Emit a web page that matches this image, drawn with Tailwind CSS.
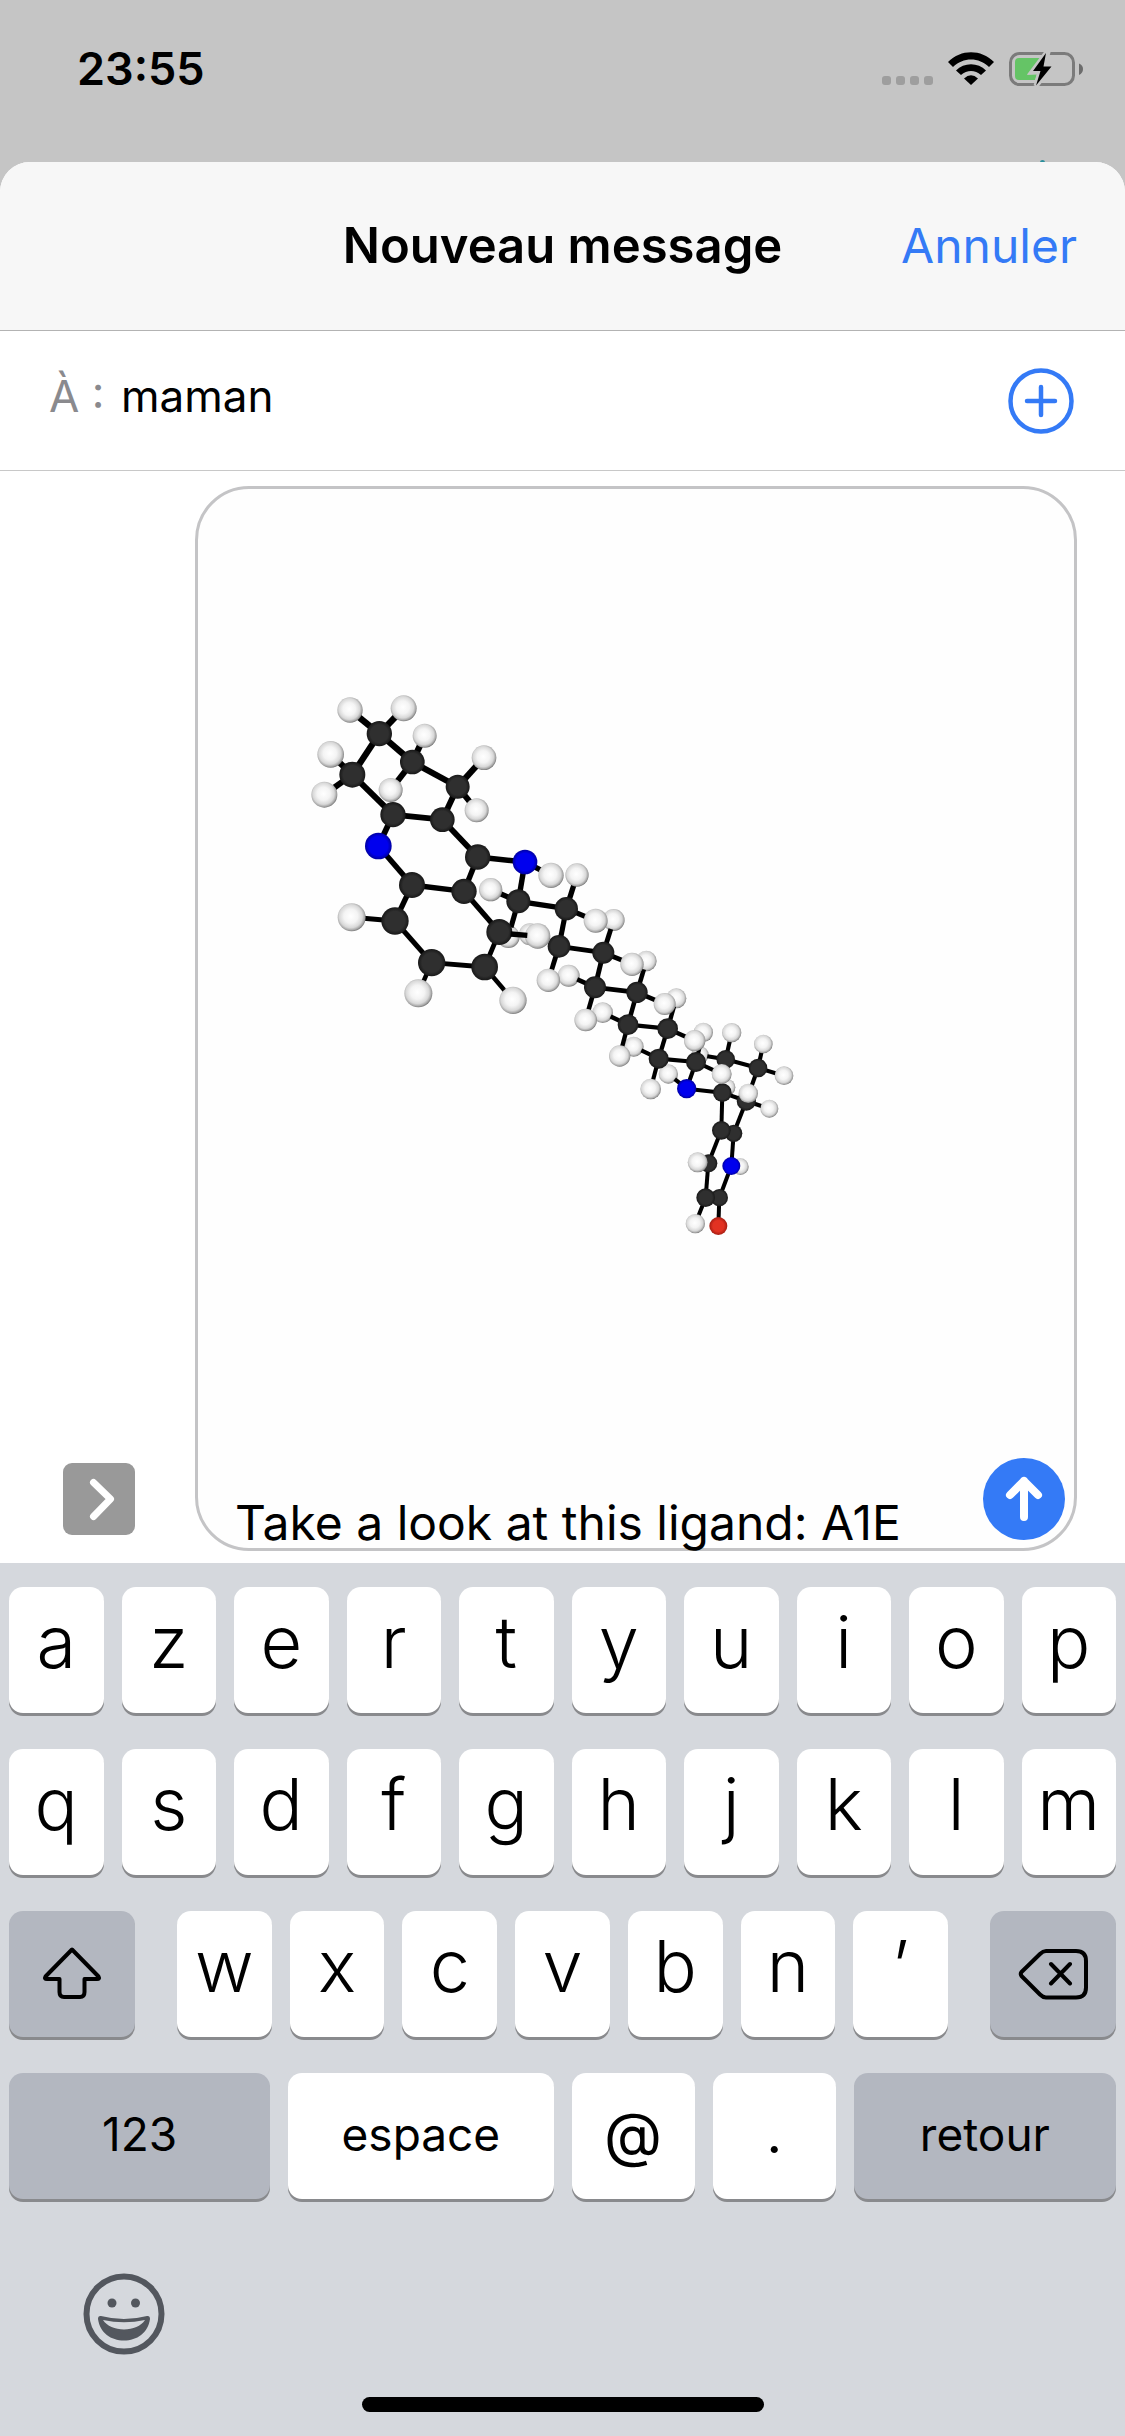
<!DOCTYPE html>
<html lang="fr">
<head>
<meta charset="utf-8">
<meta name="viewport" content="width=device-width, initial-scale=1">
<title>Nouveau message</title>
<script src="https://cdn.jsdelivr.net/npm/@tailwindcss/browser@4"></script>
</head>
<body class="flex min-h-screen flex-col bg-[#c5c5c5] font-['Inter','Liberation_Sans',sans-serif] text-black">

<!-- Status bar -->
<header class="relative flex h-[162px] shrink-0 items-start justify-between overflow-hidden pt-[42px] pr-[42px] pl-[77px]">
  <time class="text-[45px] leading-[54px] font-semibold">23:55</time>
  <div class="flex items-start pt-[10px]">
    <div class="mt-6 mr-[15px] flex gap-[5px]" aria-hidden="true">
      <span class="size-[9px] rounded-[3px] bg-[#9e9e9e]"></span>
      <span class="size-[9px] rounded-[3px] bg-[#9e9e9e]"></span>
      <span class="size-[9px] rounded-[3px] bg-[#9e9e9e]"></span>
      <span class="size-[9px] rounded-[3px] bg-[#9e9e9e]"></span>
    </div>
    <svg class="mr-[15px] h-[33px] w-[46px]" viewBox="0 0 46 33" aria-label="Wi-Fi">
      <path d="M0 10C13-3 33-3 46 10L41 15C31 5 15 5 5 15Z"/>
      <path d="M8 18.500C16 10 30 10 38 18.500L33 23C27 17.500 19 17.500 13 23Z"/>
      <path d="M16 26.500Q23 20 30 26.500L23 33Z"/>
    </svg>
    <svg class="h-[36px] w-[74px]" viewBox="0 0 74 36" aria-label="Batterie en charge">
      <rect x="1.500" y="1.500" width="63" height="31" rx="9" fill="none" stroke="#7b7b7b" stroke-width="3"/>
      <path d="M70 11.500Q74 13 74 17T70 23Z" fill="#6c6c6c"/>
      <path d="M10 6H32L18 23L28 22L26 28H10Q6 28 6 24V10Q6 6 10 6Z" fill="#65c466"/>
      <path d="M38 0L23 20H31L27 34L43 14H35L39 0Z" stroke="#c5c5c5" stroke-width="5"/>
      <path d="M37 1L24 19H31.500L27 33.500L42.500 14.500H34.500Z"/>
    </svg>
  </div>
  <span class="absolute right-20 -bottom-[3px] size-[5px] rounded-full bg-[#2a8f9c]"></span>
</header>

<main class="flex grow flex-col overflow-hidden rounded-t-[30px] bg-white">
  <!-- Title bar -->
  <div class="grid h-[169px] shrink-0 grid-cols-[1fr_auto_1fr] items-center border-b border-[#b3b3b3] bg-[#f7f7f7] px-[48px]">
    <h1 class="col-start-2 text-[49px] leading-[60px] font-semibold">Nouveau message</h1>
    <button type="button" class="justify-self-end text-[48px] leading-[60px] text-[#347af6]">Annuler</button>
  </div>

  <!-- Recipient -->
  <div class="flex h-[140px] shrink-0 items-center border-b border-[#c8c8c8] pr-[51px] pl-[49px]">
    <label for="to" class="w-[72px] pb-[10px] text-[44px] leading-[54px] whitespace-nowrap text-[#8a8a8e]">À :</label>
    <input id="to" type="text" value="maman" class="min-w-0 grow bg-transparent pb-[10px] text-[44px] leading-[54px] outline-none">
    <button type="button" aria-label="Ajouter un contact" class="shrink-0">
      <svg class="size-[66px]" viewBox="0 0 66 66" fill="none" stroke="#347af6" stroke-linecap="round">
        <circle cx="33" cy="33" r="30.500" stroke-width="4.500"/>
        <path d="M33 19V47M19 33H47" stroke-width="4.500"/>
      </svg>
    </button>
  </div>

  <!-- Message composer -->
  <div class="flex grow items-end gap-[60px] pt-[15px] pr-[48px] pb-3 pl-[63px]">
    <button type="button" aria-label="Afficher les apps" class="mb-4 flex size-[72px] shrink-0 items-center justify-center rounded-[9px] bg-[#999]">
      <svg class="size-[72px]" viewBox="0 0 72 72" fill="none" stroke="#fff" stroke-width="7" stroke-linecap="round" stroke-linejoin="round"><path d="M30.500 19.500L47.500 36L30.500 53.500"/></svg>
    </button>
    <div class="relative flex min-w-0 grow flex-col justify-between self-stretch rounded-[54px] border-[3px] border-[#c4c4c6] bg-[#fefefe]">
      <svg id="ligand" class="mt-[191px] ml-[102px] h-[570px] w-[500px]" viewBox="0 0 1500 1710" role="img" aria-label="Ligand A1E">
        <defs>
          <radialGradient id="hydrogen" cx=".47" cy=".46" r=".55">
            <stop offset="0" stop-color="#fff"/><stop offset=".45" stop-color="#f4f4f4"/><stop offset=".75" stop-color="#d8d8d8"/><stop offset=".9" stop-color="#a8a8a8"/><stop offset="1" stop-color="#707070"/>
          </radialGradient>
          <radialGradient id="carbon"><stop offset=".7" stop-color="#2f2f2f"/><stop offset="1" stop-color="#181818"/></radialGradient>
          <radialGradient id="nitrogen"><stop offset=".7" stop-color="#0000ee"/><stop offset="1" stop-color="#0000a0"/></radialGradient>
          <radialGradient id="oxygen"><stop offset=".6" stop-color="#e23222"/><stop offset="1" stop-color="#a51d12"/></radialGradient>
        </defs>
      </svg>
      <input type="text" aria-label="Message" value="Take a look at this ligand: A1E" class="relative -mb-[10px] ml-[37px] h-[72px] w-[720px] max-w-[85%] bg-transparent text-[48px] leading-[60px] outline-none">
      <button type="button" aria-label="Envoyer" class="absolute right-[9px] bottom-2 size-[82px] rounded-full bg-[#347af6]">
        <svg class="size-[82px]" viewBox="0 0 82 82" fill="none" stroke="#fff" stroke-width="8" stroke-linecap="round" stroke-linejoin="round"><path d="M41 59V23M27 37L41 23L55 37"/></svg>
      </button>
    </div>
  </div>
</main>

<!-- Keyboard -->
<section aria-label="Clavier" class="shrink-0 bg-[#d5d8dd] px-[9px] pt-6 pb-6">
  <div id="keys" class="flex flex-col gap-9"></div>
  <div class="mt-[74px] flex pl-[74px]">
    <button type="button" aria-label="Emoji">
      <svg class="size-[82px]" viewBox="0 0 82 82">
        <circle cx="41" cy="41" r="37.500" fill="none" stroke="#53575e" stroke-width="6"/>
        <circle cx="29" cy="30" r="4.500" fill="#53575e"/><circle cx="52.500" cy="30" r="4.500" fill="#53575e"/>
        <path fill="#53575e" fill-rule="evenodd" d="M18 43Q41 49 64 43Q67 42.500 67 46C65 60 54 67.500 41 67.500S17 60 15 46Q15 42.500 18 43ZM20 47C24 53 32 56.500 41 56.500S58 53 62 47Q41 51.500 20 47Z"/>
      </svg>
    </button>
  </div>
  <div class="mx-auto mt-[42px] h-[15px] w-[402px] rounded-full bg-black"></div>
</section>

<script>
  // Keyboard rows
  const SHIFT = '<svg class="size-[60px]" viewBox="0 0 60 60" fill="none" stroke="#000" stroke-width="4" stroke-linejoin="round"><path d="M30 5.500L3.500 32.500Q2 35 5 35H17.500V48Q17.500 53 22 53H38Q42.500 53 42.500 48V35H55Q58 35 56.500 32.500Z"/></svg>';
  const DELETE = '<svg class="h-[52px] w-[70px]" viewBox="0 0 70 52" fill="none" stroke="#000" stroke-width="4" stroke-linecap="round" stroke-linejoin="round"><path d="M3.500 24Q2 26 3.500 28L22 46.500Q25 49.500 28 49.500H58Q68 49.500 68 39.500V13Q68 3 58 3H28Q25 3 22 6ZM33 16L52 35.500M52 16L33 35.500"/></svg>';
  const base = 'flex h-[126px] min-w-0 items-center justify-center rounded-[14px] shadow-[0_3px_0_#898a8d] ';
  const light = base + 'bg-white ';
  const dark = base + 'bg-[#b3b7c0] ';
  const letter = 'text-[72px] leading-[72px] font-[350] pb-4 ';
  const word = 'text-[46px] leading-[56px] pb-1 ';
  const key = (cls, html, label) => `<button type="button" aria-label="${label || html}" class="${cls}">${html}</button>`;
  const letters = s => [...s].map(c => key(light + letter + 'w-full', c)).join('');
  document.getElementById('keys').innerHTML =
    `<div class="grid grid-cols-10 gap-[18px]">${letters('azertyuiop')}</div>` +
    `<div class="grid grid-cols-10 gap-[18px]">${letters('qsdfghjklm')}</div>` +
    `<div class="grid grid-cols-[126fr_770fr_126fr] gap-[42px]">${key(dark, SHIFT, 'Majuscule')}<div class="grid grid-cols-7 gap-[18px]">${letters('wxcvbn’')}</div>${key(dark, DELETE, 'Supprimer')}</div>` +
    `<div class="grid grid-cols-[261fr_265fr_123fr_123fr_262fr] gap-[18px]">${key(dark + word, '123')}${key(light + word, 'espace')}${key(light + 'text-[60px] leading-[60px] pb-1', '@')}${key(light + 'text-[54px] leading-[60px] pb-1', '.')}${key(dark + word, 'retour')}</div>`;

  // Ball-and-stick ligand. Atoms: [element, x, y, radius], listed back to front.
  const atoms = {
    h60:['H',625,770,34], h61:['H',690,763,33], h62:['H',1200,1125,26], h63:['H',1280,1222,26],
    h10:['H',1039,843,31], h11:['H',941,720,33], h12:['H',1129,955,30], h13:['H',1210,1057,29],
    h14:['H',1321,1460,25], h15:['H',1001,1100,30], h16:['H',908,998,31], h17:['H',806,887,33], h18:['H',1105,1182,29],
    h1:['H',150,90,38], h2:['H',311,85,39], h3:['H',374,167,36], h4:['H',92,223,40], h5:['H',552,233,37],
    h6:['H',73,344,39], h7:['H',272,330,36], h8:['H',530,391,36], h9:['H',572,629,35], h19:['H',155,712,42],
    h22:['H',831,585,35], h24:['H',745,901,35],
    h26:['H',857,1020,34], h28:['H',959,1128,32], h30:['H',1052,1227,31],
    h32:['H',1295,1058,29], h33:['H',1390,1092,28], h34:['H',1452,1187,28], h36:['H',1408,1286,27], h38:['H',1186,1631,29],
    c1:['C',238,161,38], c2:['C',157,284,39], c3:['C',337,246,37], c4:['C',473,320,36], c5:['C',279,404,38],
    c6:['C',427,419,37], n1:['N',235,498,40], c7:['C',533,531,38], n2:['N',675,546,37], c8:['C',336,615,39],
    c9:['C',492,634,38], c10:['C',285,723,41], c14:['C',655,664,36], c11:['C',598,756,39], c12:['C',395,848,41],
    c13:['C',554,861,40], c15:['C',799,686,35], c16:['C',777,799,34], c17:['C',910,818,33], c18:['C',885,922,33],
    c19:['C',1011,937,32], c20:['C',984,1034,31], c21:['C',1103,1046,31], c22:['C',1076,1136,30], c24:['C',1277,1138,28],
    c23:['C',1188,1146,30], n3:['N',1160,1226,29], c25:['C',1374,1164,28], c27:['C',1339,1263,29], c26:['C',1267,1238,28],
    c29:['C',1301,1360,26], c28:['C',1264,1351,28], c30:['C',1225,1450,27], n4:['N',1294,1458,27],
    c32:['C',1258,1553,26], c31:['C',1217,1553,28], o1:['O',1255,1638,27],
    h20:['H',355,940,42], h40:['H',639,961,41], h21:['H',753,586,38], h41:['H',713,768,38], h23:['H',887,722,36],
    h25:['H',996,853,35], h27:['H',1094,972,33], h29:['H',1184,1082,32], h31:['H',1265,1182,30], h35:['H',1345,1240,29], h37:['H',1193,1447,30]
  };
  const bonds = 'h1-c1 h2-c1 c1-c2 c1-c3 h3-c3 h7-c3 c3-c4 h5-c4 h8-c4 h4-c2 h6-c2 c2-c5 c4-c6 c5-c6 c5-n1 c6-c7 c7-n2 n1-c8 c8-c9 c7-c9 c8-c10 h19-c10 c10-c12 h20-c12 c12-c13 h40-c13 c13-c11 c9-c11 n2-h21 n2-c14 h9-c14 c14-h60 c14-c15 h22-c15 h23-c15 c15-c16 c16-h24 c16-c17 c17-h11 c17-h25 c17-c18 c18-h17 c18-h26 c18-c19 c19-h10 c19-h27 c19-c20 c20-h16 c20-h28 c20-c21 c21-h12 c21-h29 c21-c22 c22-h15 c22-h30 c22-c23 c23-h13 c23-h31 c23-n3 n3-h18 n3-c26 c24-h32 c24-h62 c24-c25 c25-h33 c25-h34 c25-c27 c26-c27 c27-h36 c26-c28 c27-c29 c28-c29 c28-c30 c29-n4 c30-c31 n4-c32 c31-c32 c31-h38 c32-o1'.split(' ');
  const fill = { H:'hydrogen', C:'carbon', N:'nitrogen', O:'oxygen' };
  const ball = ([e, x, y, r]) => `<circle cx="${x}" cy="${y}" r="${r}" fill="url(#${fill[e]})"/>`;
  const stick = (a, b) => {
    // A stick ends at the surface of the hydrogen it holds
    const [, x1, y1, r1] = a, [, x2, y2, r2] = b;
    const d = Math.hypot(x2 - x1, y2 - y1), ux = (x2 - x1) / d, uy = (y2 - y1) / d;
    const s1 = a[0] === 'H' ? r1 * .85 : 0, s2 = b[0] === 'H' ? r2 * .85 : 0;
    return `<path d="M${x1 + ux * s1} ${y1 + uy * s1}L${x2 - ux * s2} ${y2 - uy * s2}" stroke="#000" stroke-width="${Math.max(12, 20 - y1 / 150)}"/>`;
  };
  const list = Object.entries(atoms);
  const isBack = k => /^h(6\d|1[0-8])$/.test(k);
  document.getElementById('ligand').insertAdjacentHTML('beforeend',
    list.filter(([k]) => isBack(k)).map(([, a]) => ball(a)).join('') +
    bonds.map(b => { const [p, q] = b.split('-'); return stick(atoms[p], atoms[q]); }).join('') +
    list.filter(([k]) => !isBack(k)).map(([, a]) => ball(a)).join('') +
    '<path d="M632 762L682 766" stroke="#000" stroke-width="16"/>');
</script>
</body>
</html>
